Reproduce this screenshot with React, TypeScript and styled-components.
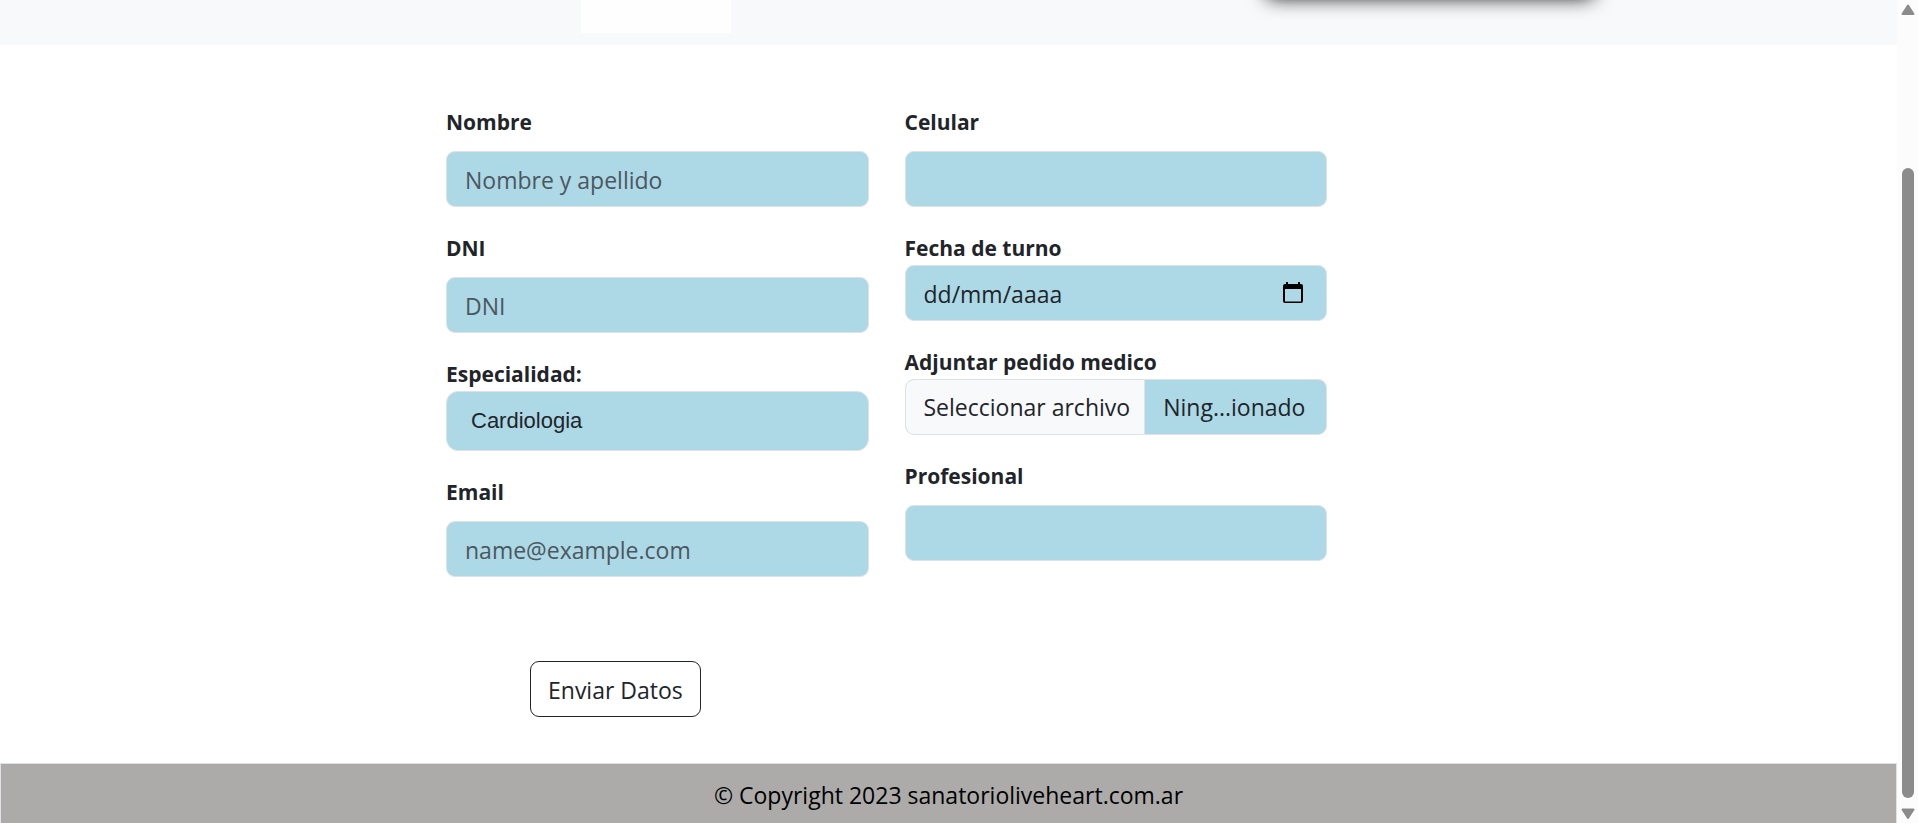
import React from "react";
import styled, { createGlobalStyle } from "styled-components";

const GlobalStyle = createGlobalStyle`
  *, *::before, *::after { box-sizing: border-box; }
  body {
    margin: 0;
    background: #fff;
    color: #212529;
    font-family: "Segoe UI", "Open Sans", "Noto Sans", sans-serif;
    font-size: 23px;
    line-height: 36px;
  }
`;

const Shell = styled.div`
  display: grid;
  grid-template-columns: minmax(0, 1fr) 21px;
  min-height: 100vh;
`;

const Page = styled.div`
  display: flex;
  flex-direction: column;
`;

const Header = styled.header`
  display: grid;
  grid-template-columns: 581fr 150fr 536fr 326fr 304fr;
  height: 45px;
  overflow: hidden;
  background: #f8f9fb;
`;

const Logo = styled.div`
  grid-column: 2;
  height: 33px;
  background: #fefefe;
`;

const Banner = styled.div`
  grid-column: 4;
  height: 80px;
  margin-top: -83px;
  border-radius: 4px;
  box-shadow: 0 0 20px #000;
`;

const Main = styled.main`
  display: grid;
  grid-template-columns: 446fr 881fr 570fr;
  flex: 1;
  padding-top: 60px;
`;

const Form = styled.form`
  grid-column: 2;
  display: grid;
  grid-template-columns: 1fr 1fr;
  column-gap: 36px;
  align-content: start;
`;

const Column = styled.div`
  display: flex;
  flex-direction: column;
  gap: 24px;
  min-width: 0;
`;

const Field = styled.div<{ $tight?: boolean }>`
  display: flex;
  flex-direction: column;
  gap: ${(p) => (p.$tight ? 0 : 12)}px;
`;

const Label = styled.label`
  font-size: 21px;
  line-height: 34px;
  font-weight: 700;
`;

const Input = styled.input`
  width: 100%;
  height: 56px;
  padding: 2px 18px 0;
  border: 1px solid #dee2e6;
  border-radius: 9px;
  background: #add8e6;
  color: #212529;
  font: inherit;
  &::placeholder { color: #4b575f; opacity: 1; }
`;

const DateBox = styled.div`
  display: flex;
  align-items: center;
  height: 56px;
  padding-right: 23px;
  border: 1px solid #dee2e6;
  border-radius: 9px;
  background: #add8e6;
`;

const DateInput = styled.input`
  flex: 1;
  min-width: 0;
  padding: 2px 18px 0;
  border: 0;
  background: transparent;
  color: #212529;
  font: inherit;
  &::placeholder { color: #212529; opacity: 1; }
`;

const IconButton = styled.button`
  display: flex;
  padding: 0;
  border: 0;
  background: transparent;
  color: #000;
`;

const Select = styled.select`
  appearance: none;
  width: 100%;
  height: 60px;
  padding: 0 24px 2px;
  border: 1px solid #dee2e6;
  border-radius: 12px;
  background: #add8e6;
  color: #212529;
  font-family: Arial, "Liberation Sans", sans-serif;
  font-size: 22px;
`;

const FileBox = styled.label`
  display: flex;
  height: 56px;
  overflow: hidden;
  border: 1px solid #dee2e6;
  border-radius: 9px;
  background: #add8e6;
  line-height: 54px;
  white-space: nowrap;
`;

const FileInput = styled.input`
  position: absolute;
  width: 1px;
  height: 1px;
  opacity: 0;
`;

const FileAction = styled.span`
  flex: 0 0 57%;
  padding-left: 18px;
  border-right: 1px solid #dee2e6;
  background: #f8f9fb;
`;

const FileName = styled.span`
  padding-left: 18px;
`;

const Submit = styled.button`
  justify-self: start;
  height: 56px;
  margin: 84px 0 46px 84px;
  padding: 2px 17px 0;
  border: 1px solid #212529;
  border-radius: 9px;
  background: #fff;
  color: #212529;
  font: inherit;
`;

const Footer = styled.footer`
  padding: 13px 0 10px;
  border: 1px solid #dee2e6;
  border-bottom: 0;
  background: #acabaa;
  color: #000;
  text-align: center;
`;

const ScrollBar = styled.div`
  display: flex;
  flex-direction: column;
  align-items: center;
  padding: 4px 0 3px;
  background: #fcfcfc;
  color: #8b8b8b;
`;

const Track = styled.div`
  display: grid;
  grid-template-rows: 152fr 630fr 10fr;
  flex: 1;
  width: 12px;
`;

const Thumb = styled.div`
  grid-row: 2;
  border-radius: 6px;
  background: #8b8b8b;
`;

const Arrow = ({ down }: { down?: boolean }) => (
  <svg width="14" height="12" viewBox="0 0 14 12" aria-hidden="true">
    <path
      d={down ? "M1.5 1.5h11L7 10z" : "M7 1.5l5.500 8.500h-11z"}
      fill="currentColor"
      stroke="currentColor"
      strokeWidth="2"
      strokeLinejoin="round"
    />
  </svg>
);

const CalendarIcon = () => (
  <svg width="20" height="22" viewBox="0 0 20 22" aria-hidden="true">
    <path
      fill="currentColor"
      fillRule="evenodd"
      d="M3 0h2v2h10V0h2v2h1a2 2 0 0 1 2 2v15a2 2 0 0 1-2 2H2a2 2 0 0 1-2-2V4a2 2 0 0 1 2-2h1zM2 7v12.500h16V7z"
    />
  </svg>
);

export default function App() {
  return (
    <Shell>
      <GlobalStyle />
      <Page>
        <Header>
          <Logo />
          <Banner />
        </Header>
        <Main>
          <Form onSubmit={(e) => e.preventDefault()}>
            <Column>
              <Field>
                <Label htmlFor="nombre">Nombre</Label>
                <Input id="nombre" type="text" placeholder="Nombre y apellido" />
              </Field>
              <Field>
                <Label htmlFor="dni">DNI</Label>
                <Input id="dni" type="text" placeholder="DNI" />
              </Field>
              <Field $tight>
                <Label htmlFor="especialidad">Especialidad:</Label>
                <Select id="especialidad" defaultValue="cardiologia">
                  <option value="cardiologia">Cardiologia</option>
                </Select>
              </Field>
              <Field>
                <Label htmlFor="email">Email</Label>
                <Input id="email" type="email" placeholder="name@example.com" />
              </Field>
            </Column>
            <Column>
              <Field>
                <Label htmlFor="celular">Celular</Label>
                <Input id="celular" type="tel" />
              </Field>
              <Field $tight>
                <Label htmlFor="fecha">Fecha de turno</Label>
                <DateBox>
                  <DateInput id="fecha" type="text" placeholder="dd/mm/aaaa" />
                  <IconButton type="button" aria-label="Abrir calendario">
                    <CalendarIcon />
                  </IconButton>
                </DateBox>
              </Field>
              <Field $tight>
                <Label htmlFor="pedido">Adjuntar pedido medico</Label>
                <FileBox htmlFor="pedido">
                  <FileInput id="pedido" type="file" />
                  <FileAction>Seleccionar archivo</FileAction>
                  <FileName>Ning...ionado</FileName>
                </FileBox>
              </Field>
              <Field>
                <Label htmlFor="profesional">Profesional</Label>
                <Input id="profesional" type="text" />
              </Field>
            </Column>
            <Submit type="submit">Enviar Datos</Submit>
          </Form>
        </Main>
        <Footer>© Copyright 2023 sanatorioliveheart.com.ar</Footer>
      </Page>
      <ScrollBar>
        <Arrow />
        <Track>
          <Thumb />
        </Track>
        <Arrow down />
      </ScrollBar>
    </Shell>
  );
}
